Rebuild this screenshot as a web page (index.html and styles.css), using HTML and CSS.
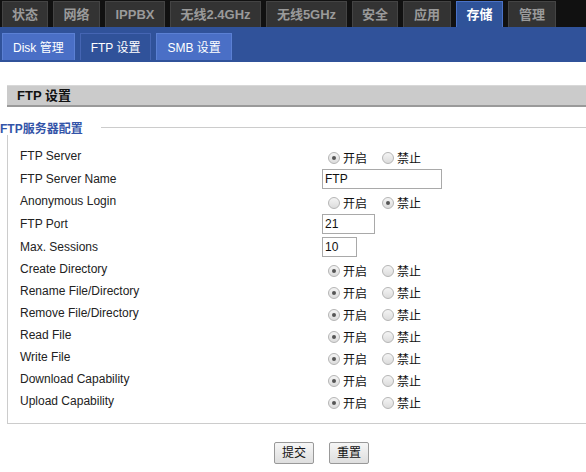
FILE: index.html
```html
<!DOCTYPE html>
<html>
<head>
<meta charset="utf-8">
<link rel="stylesheet" href="styles.css">
</head>
<body>
<div class="topnav">
  <div class="tab">状态</div>
  <div class="tab">网络</div>
  <div class="tab">IPPBX</div>
  <div class="tab">无线2.4GHz</div>
  <div class="tab">无线5GHz</div>
  <div class="tab">安全</div>
  <div class="tab">应用</div>
  <div class="tab active">存储</div>
  <div class="tab">管理</div>
</div>
<div class="subnav">
  <div class="subtab">Disk 管理</div>
  <div class="subtab active">FTP 设置</div>
  <div class="subtab">SMB 设置</div>
</div>
<div class="content">
  <div class="section-title">FTP 设置</div>
  <div class="fs">
    <div class="fs-head"><span class="legend">FTP服务器配置</span><span class="fs-line"></span></div>
    <div class="fs-body">
      <div class="row"><div class="lbl">FTP Server</div><div class="ctl"><span class="radio on"></span><span class="rt">开启</span><span class="radio"></span><span class="rt">禁止</span></div></div>
      <div class="row tall"><div class="lbl">FTP Server Name</div><div class="ctl"><span class="input w120">FTP</span></div></div>
      <div class="row"><div class="lbl">Anonymous Login</div><div class="ctl"><span class="radio"></span><span class="rt">开启</span><span class="radio on"></span><span class="rt">禁止</span></div></div>
      <div class="row tall"><div class="lbl">FTP Port</div><div class="ctl"><span class="input w53">21</span></div></div>
      <div class="row tall"><div class="lbl">Max. Sessions</div><div class="ctl"><span class="input w35">10</span></div></div>
      <div class="row"><div class="lbl">Create Directory</div><div class="ctl"><span class="radio on"></span><span class="rt">开启</span><span class="radio"></span><span class="rt">禁止</span></div></div>
      <div class="row"><div class="lbl">Rename File/Directory</div><div class="ctl"><span class="radio on"></span><span class="rt">开启</span><span class="radio"></span><span class="rt">禁止</span></div></div>
      <div class="row"><div class="lbl">Remove File/Directory</div><div class="ctl"><span class="radio on"></span><span class="rt">开启</span><span class="radio"></span><span class="rt">禁止</span></div></div>
      <div class="row"><div class="lbl">Read File</div><div class="ctl"><span class="radio on"></span><span class="rt">开启</span><span class="radio"></span><span class="rt">禁止</span></div></div>
      <div class="row"><div class="lbl">Write File</div><div class="ctl"><span class="radio on"></span><span class="rt">开启</span><span class="radio"></span><span class="rt">禁止</span></div></div>
      <div class="row"><div class="lbl">Download Capability</div><div class="ctl"><span class="radio on"></span><span class="rt">开启</span><span class="radio"></span><span class="rt">禁止</span></div></div>
      <div class="row"><div class="lbl">Upload Capability</div><div class="ctl"><span class="radio on"></span><span class="rt">开启</span><span class="radio"></span><span class="rt">禁止</span></div></div>
    </div>
  </div>
  <div class="buttons">
    <span class="btn">提交</span>
    <span class="btn">重置</span>
  </div>
</div>
</body>
</html>
```
FILE: styles.css
```css
* { box-sizing: border-box; }
body {
  margin: 0;
  font-family: "Liberation Sans", "Noto Sans CJK SC", sans-serif;
  font-size: 12px;
  color: #222;
  background: #fff;
}
.topnav {
  display: flex;
  gap: 5px;
  height: 27px;
  background: #111;
  padding: 1px 0 0 2px;
}
.tab {
  height: 26px;
  width: 46px;
  background: #333;
  border: 1px solid #444;
  border-bottom: none;
  color: #9a9a9a;
  font-weight: bold;
  font-size: 13px;
  line-height: 26px;
  text-align: center;
  white-space: nowrap;
}
.tab:nth-child(2) { width: 47px; }
.tab:nth-child(3) { width: 60px; }
.tab:nth-child(4) { width: 91px; }
.tab:nth-child(5) { width: 81px; }
.tab:nth-child(7) { width: 48px; }
.tab:nth-child(8) { width: 47px; }
.tab:nth-child(9) { width: 48px; }
.tab.active {
  background: #2f5399;
  border-color: #4a72c8;
  color: #fff;
}
.subnav {
  display: flex;
  gap: 5px;
  height: 35px;
  background: #30529a;
  padding: 6px 0 0 2px;
}
.subtab {
  height: 27px;
  padding: 0 10px;
  background: #4a6fc6;
  border: 1px solid #5b80d4;
  border-bottom: none;
  color: #fff;
  font-size: 12px;
  line-height: 28px;
}
.subtab.active {
  background: #30529a;
  border-color: #4565b3;
}
.content {
  padding-top: 23px;
}
.section-title {
  margin-left: 7px;
  height: 22px;
  background: #cbcbcb;
  border-top: 1px solid #d8d8d8;
  border-bottom: 2px solid #9a9a9a;
  padding-left: 10px;
  font-weight: bold;
  font-size: 13px;
  line-height: 19px;
  color: #111;
}
.fs {
  margin-top: 12px;
}
.fs-head {
  display: flex;
  align-items: center;
  height: 16px;
}
.legend {
  color: #3354a8;
  font-weight: bold;
  font-size: 12px;
  padding-right: 18px;
}
.fs-line {
  flex: 1;
  border-top: 1px solid #ccc;
}
.fs-body {
  margin-left: 7px;
  border-left: 1px solid #ccc;
  border-bottom: 1px solid #ccc;
  padding: 10px 0 11px 12px;
}
.row {
  display: flex;
  align-items: center;
  height: 22px;
}
.row.tall {
  height: 23px;
}
.lbl {
  width: 302px;
  color: #222;
}
.ctl {
  display: flex;
  align-items: center;
  padding-top: 3px;
}
.radio {
  width: 12px;
  height: 12px;
  border-radius: 50%;
  border: 1px solid #b5b5b5;
  background: linear-gradient(#f4f4f4, #dcdcdc);
  margin-left: 6px;
  position: relative;
}
.radio.on::after {
  content: "";
  position: absolute;
  left: 3px;
  top: 3px;
  width: 4px;
  height: 4px;
  border-radius: 50%;
  background: #555;
}
.rt {
  margin-left: 3px;
  width: 33px;
  color: #111;
}
.input {
  display: block;
  height: 20px;
  border: 1px solid #a9a9a9;
  padding-left: 2px;
  line-height: 18px;
  color: #111;
  margin-top: -3px;
}
.w120 { width: 120px; }
.w53 { width: 53px; }
.w35 { width: 35px; }
.buttons {
  display: flex;
  justify-content: flex-start;
  gap: 15px;
  padding: 18px 0 0 274px;
}
.btn {
  width: 40px;
  height: 22px;
  border: 1px solid #999;
  border-radius: 2px;
  background: linear-gradient(#f6f6f6, #dedede);
  text-align: center;
  line-height: 20px;
  font-size: 12px;
  color: #111;
}
```
